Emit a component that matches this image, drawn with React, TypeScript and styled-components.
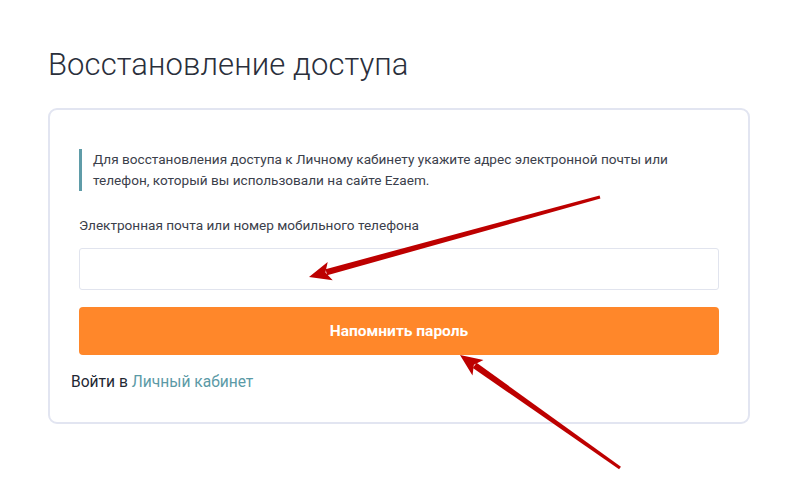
import React from "react";
import styled, { createGlobalStyle } from "styled-components";

const Global = createGlobalStyle`
  html, body { margin: 0; padding: 0; background: #ffffff; }
  body { font-family: Roboto, "Noto Sans", "Liberation Sans", sans-serif; color: #2d3340; }
  * { box-sizing: border-box; }
`;

const Page = styled.div`
  position: relative;
  width: 800px;
  height: 490px;
  padding: 46px 50px 0 48px;
  overflow: hidden;
`;

const Title = styled.h1`
  margin: 0 0 24px 0;
  font-size: 31px;
  line-height: 38px;
  font-weight: 300;
  color: #2a2f3b;
  letter-spacing: 0.1px;
`;

const Card = styled.div`
  width: 702px;
  border: 2px solid #e2e5f1;
  border-radius: 9px;
  padding: 39px 29px 30px 29px;
  display: flex;
  flex-direction: column;
`;

const Notice = styled.div`
  border-left: 3px solid #5f9ca8;
  padding: 0 0 0 11px;
  font-size: 13.6px;
  line-height: 21px;
  color: #3b404b;
`;

const Label = styled.label`
  margin-top: 24px;
  font-size: 13.6px;
  line-height: 20px;
  color: #3b404b;
`;

const Input = styled.input`
  margin-top: 13px;
  height: 42px;
  width: 100%;
  border: 1px solid #e1e4ee;
  border-radius: 3px;
  background: #fff;
  outline: none;
  padding: 0 12px;
  font-family: inherit;
  font-size: 14px;
`;

const Button = styled.button`
  margin-top: 17px;
  height: 48px;
  width: 100%;
  border: none;
  border-radius: 4px;
  background: #ff872a;
  color: #ffffff;
  font-family: inherit;
  font-size: 15.5px;
  font-weight: 700;
  cursor: pointer;
`;

const LoginRow = styled.div`
  margin: 17px 0 0 -8px;
  font-size: 15.6px;
  line-height: 20px;
  color: #222733;
`;

const Link = styled.a`
  color: #5b9aa6;
  text-decoration: none;
`;

const Overlay = styled.svg`
  position: absolute;
  left: 0;
  top: 0;
  pointer-events: none;
`;

function Arrow({ x1, y1, x2, y2 }: { x1: number; y1: number; x2: number; y2: number }) {
  const dx = x2 - x1;
  const dy = y2 - y1;
  const len = Math.hypot(dx, dy);
  const ux = dx / len;
  const uy = dy / len;
  const px = -uy;
  const py = ux;
  const headLen = 22;
  const headW = 9.5;
  const bx = x2 - ux * headLen;
  const by = y2 - uy * headLen;
  const tailW = 1.6;
  const neckW = 3.2;
  const shaft = [
    [x1 + px * tailW, y1 + py * tailW],
    [bx + ux * 4 + px * neckW, by + uy * 4 + py * neckW],
    [bx + ux * 4 - px * neckW, by + uy * 4 - py * neckW],
    [x1 - px * tailW, y1 - py * tailW],
  ];
  const head = [
    [x2, y2],
    [bx + px * headW, by + py * headW],
    [bx + ux * 5, by + uy * 5],
    [bx - px * headW, by - py * headW],
  ];
  const toPts = (a: number[][]) => a.map((p) => p.join(",")).join(" ");
  return (
    <g fill="#bd0000">
      <polygon points={toPts(shaft)} />
      <polygon points={toPts(head)} />
    </g>
  );
}

export default function App() {
  return (
    <>
      <Global />
      <Page>
        <Title>Восстановление доступа</Title>
        <Card>
          <Notice>
            Для восстановления доступа к Личному кабинету укажите адрес электронной почты или
            <br />
            телефон, который вы использовали на сайте Ezaem.
          </Notice>
          <Label htmlFor="login">Электронная почта или номер мобильного телефона</Label>
          <Input id="login" type="text" />
          <Button type="button">Напомнить пароль</Button>
          <LoginRow>
            Войти в <Link href="#">Личный кабинет</Link>
          </LoginRow>
        </Card>
        <Overlay width={800} height={490} viewBox="0 0 800 490">
          <Arrow x1={600} y1={197} x2={309} y2={277} />
          <Arrow x1={620} y1={468} x2={460} y2={355} />
        </Overlay>
      </Page>
    </>
  );
}
